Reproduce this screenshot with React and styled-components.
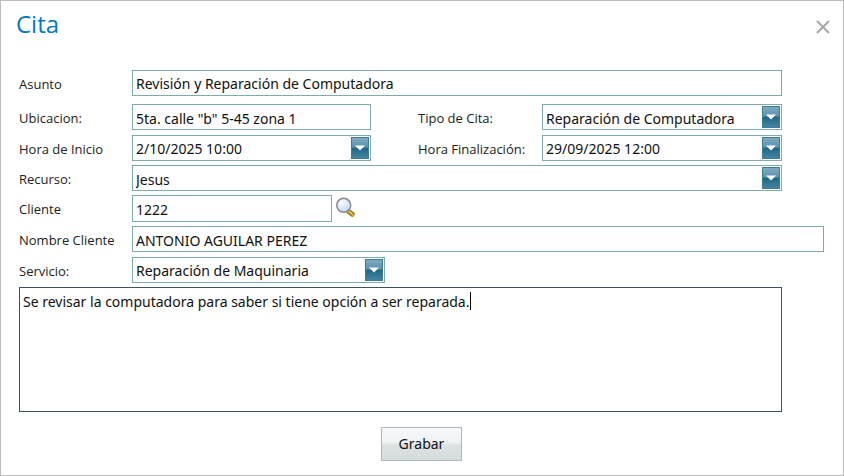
import React from 'react';
import styled, { createGlobalStyle } from 'styled-components';

const GlobalStyle = createGlobalStyle`
  *, *::before, *::after { box-sizing: border-box; }
  body { margin: 0; background: #fff; }
  body, input, select, textarea, button {
    font-family: 'Noto Sans', Tahoma, sans-serif;
    font-size: 14px;
    color: #111;
  }
`;

const Dialog = styled.section`
  display: flex;
  flex-direction: column;
  min-height: 100vh;
  padding: 0 19px 14px 18px;
  border: 1px solid #bcbcbc;
  background: #fff;
`;

const Header = styled.header`
  display: flex;
  justify-content: space-between;
  align-items: center;
  height: 46px;
  margin: 0 -6px 23px -3px;
`;

const Title = styled.h1`
  margin: 0;
  font: 400 24px/32px 'Open Sans', 'Segoe UI', sans-serif;
  color: #0078c8;
`;

const CloseButton = styled.button`
  display: flex;
  padding: 6px 0 0;
  border: 0;
  background: none;
  color: #a8a8a8;
  cursor: pointer;
`;

const Form = styled.form`
  display: flex;
  flex: 1;
  flex-direction: column;
`;

const Row = styled.div`
  display: grid;
  grid-template-columns: 113px ${(p) => p.$columns || 'minmax(0, 1fr)'};
  align-items: start;
  margin: 0 ${(p) => (p.$wide ? '0' : '42px')} ${(p) => p.$gap || '4px'} 0;
`;

const Label = styled.label`
  font: 400 13px/28px 'Open Sans', 'Segoe UI', sans-serif;
  height: 26px;
  color: #222;
`;

const SecondLabel = styled(Label)`
  grid-column: 4;
`;

const TextInput = styled.input`
  width: 100%;
  height: ${(p) => (p.$tall ? '27px' : '26px')};
  padding: ${(p) => (p.$low ? '2px' : '0')} 3px 0;
  border: 1px solid #7fabaf;
  border-radius: 0;
  background: #fff;
  outline: none;
`;

const PickerFrame = styled.div`
  display: grid;
  grid-template-columns: minmax(0, 1fr) 18px;
  height: 26px;
  padding: 1px;
  border: 1px solid #7fabaf;
  background: #fff;
`;

const PickerInput = styled.input`
  min-width: 0;
  padding: 0 2px;
  border: 0;
  background: none;
  outline: none;
`;

const PickerSelect = styled.select`
  grid-area: 1 / 1 / 2 / 3;
  padding: ${(p) => (p.$low ? '2px' : '0')} 20px 0 2px;
  border: 0;
  appearance: none;
  background: none;
  outline: none;
`;

const ArrowBox = styled.span`
  display: flex;
  grid-area: 1 / 2 / 2 / 3;
  align-items: center;
  justify-content: center;
  border: 1px solid #3b7d99;
  background: linear-gradient(#7fa9be 0%, #5b94ae 46%, #1f6685 50%, #4484a0 100%);
  pointer-events: none;
`;

const ArrowButton = styled(ArrowBox)`
  padding: 0;
  pointer-events: auto;
  cursor: pointer;
`;

const ClientGroup = styled.div`
  display: flex;
  align-items: flex-start;
  gap: 3px;
`;

const ClientField = styled.div`
  flex: 0 1 200px;
`;

const SearchButton = styled.button`
  display: flex;
  padding: 2px 0 0;
  border: 0;
  background: none;
  cursor: pointer;
`;

const NotesFrame = styled.div`
  position: relative;
  display: flex;
  flex: 1;
  min-height: 125px;
  margin-right: 42px;
`;

const Notes = styled.textarea`
  flex: 1;
  padding: 4px 3px;
  border: 1px solid #3d545a;
  border-radius: 0;
  background: #fff;
  line-height: 20px;
  resize: none;
  outline: none;
`;

const Caret = styled.span`
  position: absolute;
  top: 5px;
  left: 451px;
  width: 1px;
  height: 18px;
  background: #000;
`;

const Actions = styled.div`
  display: flex;
  justify-content: center;
  margin-top: 15px;
`;

const SaveButton = styled.button`
  width: 81px;
  height: 34px;
  padding: 0 0 2px;
  border: 1px solid #adb8bc;
  background: linear-gradient(#f7fafa 0%, #eef2f2 46%, #dde3e3 52%, #d6dcdc 100%);
  cursor: pointer;
`;

const Arrow = () => (
  <svg width="10" height="6" viewBox="0 0 10 6" aria-hidden="true">
    <path d="M0 0.5H10L5 5.5Z" fill="#fff" />
  </svg>
);

const CloseIcon = () => (
  <svg width="14" height="14" viewBox="0 0 14 14" aria-hidden="true">
    <path d="M1 1L13 13M13 1L1 13" stroke="currentColor" strokeWidth="2" />
  </svg>
);

const SearchIcon = () => (
  <svg width="20" height="20" viewBox="0 0 20 20" aria-hidden="true">
    <defs>
      <radialGradient id="lens" cx="0.35" cy="0.3" r="0.8">
        <stop offset="0" stopColor="#fbfdff" />
        <stop offset="0.6" stopColor="#d5e6ff" />
        <stop offset="1" stopColor="#a9c8f8" />
      </radialGradient>
      <linearGradient id="grip" x1="0" y1="1" x2="1" y2="0">
        <stop offset="0" stopColor="#8a6a1c" />
        <stop offset="0.5" stopColor="#e8be38" />
        <stop offset="1" stopColor="#7d6428" />
      </linearGradient>
    </defs>
    <path d="M12.5 12.5L15 15" stroke="#77777b" strokeWidth="3" />
    <path d="M14.2 14.8L17.4 17.4" stroke="url(#grip)" strokeWidth="4.8" strokeLinecap="round" />
    <path d="M14.2 14.2L17 16.6" stroke="#f8dc70" strokeWidth="1" />
    <circle cx="8.7" cy="8.2" r="6.9" fill="url(#lens)" stroke="#88898f" strokeWidth="1.7" />
    <circle cx="8.7" cy="8.2" r="5.7" fill="none" stroke="#e4ebf7" strokeWidth="0.7" />
  </svg>
);

function Dropdown({ id, value, low }) {
  return (
    <PickerFrame>
      <PickerSelect id={id} defaultValue={value} $low={low}>
        <option>{value}</option>
      </PickerSelect>
      <ArrowBox><Arrow /></ArrowBox>
    </PickerFrame>
  );
}

function DatePicker({ id, value }) {
  return (
    <PickerFrame>
      <PickerInput id={id} defaultValue={value} />
      <ArrowButton as="button" type="button" aria-label="Abrir calendario"><Arrow /></ArrowButton>
    </PickerFrame>
  );
}

const PAIR = 'minmax(0, 239fr) 47px 124px minmax(0, 240fr)';

export default function App() {
  return (
    <>
      <GlobalStyle />
      <Dialog role="dialog" aria-labelledby="titulo">
        <Header>
          <Title id="titulo">Cita</Title>
          <CloseButton type="button" aria-label="Cerrar"><CloseIcon /></CloseButton>
        </Header>
        <Form onSubmit={(e) => e.preventDefault()}>
          <Row $gap="8px">
            <Label htmlFor="asunto">Asunto</Label>
            <TextInput id="asunto" defaultValue="Revisión y Reparación de Computadora" />
          </Row>
          <Row $columns={PAIR} $gap="5px">
            <Label htmlFor="ubicacion">Ubicacion:</Label>
            <TextInput id="ubicacion" $low defaultValue={'5ta. calle "b" 5-45 zona 1'} />
            <SecondLabel htmlFor="tipo">Tipo de Cita:</SecondLabel>
            <Dropdown id="tipo" value="Reparación de Computadora" low />
          </Row>
          <Row $columns={PAIR}>
            <Label htmlFor="inicio">Hora de Inicio</Label>
            <DatePicker id="inicio" value="2/10/2025 10:00" />
            <SecondLabel htmlFor="fin">Hora Finalización:</SecondLabel>
            <DatePicker id="fin" value="29/09/2025 12:00" />
          </Row>
          <Row>
            <Label htmlFor="recurso">Recurso:</Label>
            <Dropdown id="recurso" value="Jesus" low />
          </Row>
          <Row>
            <Label htmlFor="cliente">Cliente</Label>
            <ClientGroup>
              <ClientField><TextInput id="cliente" $tall $low defaultValue="1222" /></ClientField>
              <SearchButton type="button" aria-label="Buscar cliente"><SearchIcon /></SearchButton>
            </ClientGroup>
          </Row>
          <Row $wide $gap="5px">
            <Label htmlFor="nombre">Nombre Cliente</Label>
            <TextInput id="nombre" $low defaultValue="ANTONIO AGUILAR PEREZ" />
          </Row>
          <Row $columns="minmax(0, 253px)">
            <Label htmlFor="servicio">Servicio:</Label>
            <Dropdown id="servicio" value="Reparación de Maquinaria" />
          </Row>
          <NotesFrame>
            <Notes
              aria-label="Descripción"
              defaultValue="Se revisar la computadora para saber si tiene opción a ser reparada."
            />
            <Caret />
          </NotesFrame>
          <Actions>
            <SaveButton type="submit">Grabar</SaveButton>
          </Actions>
        </Form>
      </Dialog>
    </>
  );
}
